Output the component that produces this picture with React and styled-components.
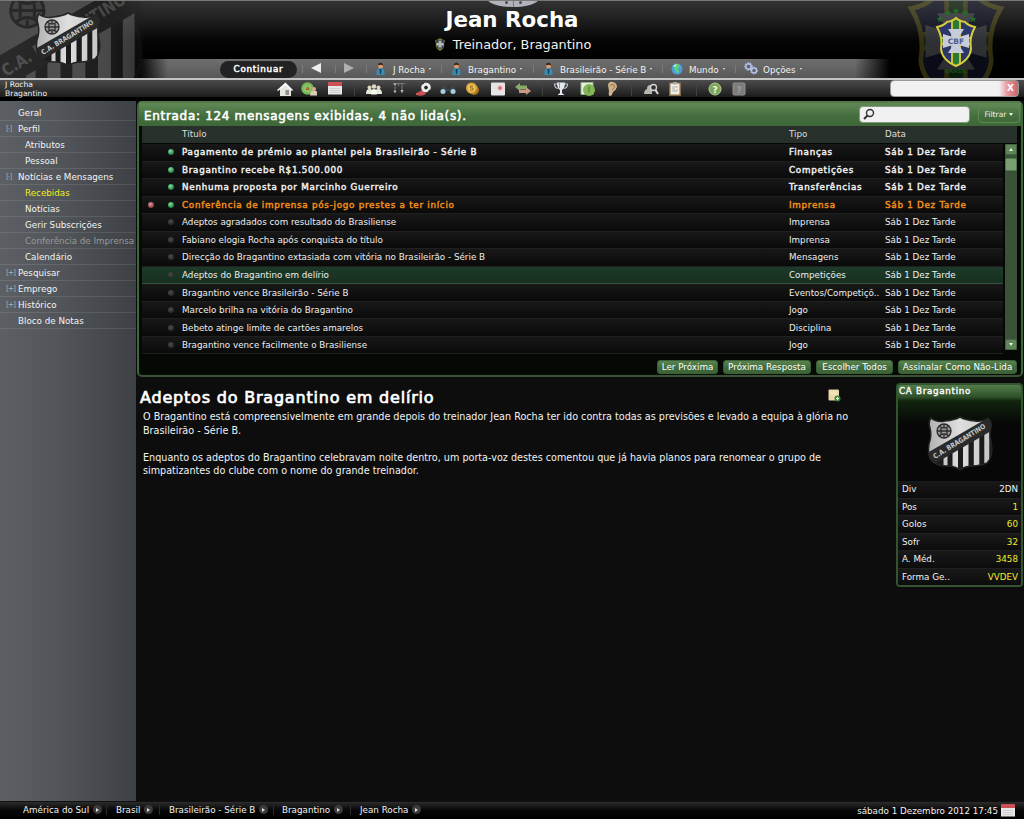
import React from 'react';
import styled, { createGlobalStyle } from 'styled-components';

const GlobalStyle = createGlobalStyle`
  * { box-sizing: border-box; }
  body {
    margin: 0;
    background: #000;
    overflow: hidden;
    color: #f2f2f2;
    font-family: 'DejaVu Sans', sans-serif;
    font-size: 8.75px;
    white-space: nowrap;
  }
`;

const Screen = styled.div`
  width: 1024px;
  height: 819px;
  display: flex;
  flex-direction: column;
`;

/* ---------- header ---------- */

const Header = styled.header`
  position: relative;
  height: 80px;
  display: flex;
  flex-direction: column;
  overflow: hidden;
  border-top: 1px solid #787878;
  border-bottom: 2px solid #c4c4c4;
  background: linear-gradient(#333 0, #1d1d1d 20px, #050505 40px, #000 58px);
`;

const Backdrop = styled.div`
  position: absolute;
  top: 0;
  left: ${(p) => (p.$right ? 'auto' : '0')};
  right: ${(p) => (p.$right ? '0' : 'auto')};
  width: 146px;
  height: 78px;
  z-index: 2;
  background: ${(p) => (p.$right ? 'none' : 'linear-gradient(to right, #2b2b2b, #1d1d1d 75%, rgba(0,0,0,0))')};
`;

const Handle = styled.div`
  position: absolute;
  top: -9px;
  left: 488px;
  width: 50px;
  height: 15px;
  border-radius: 50%;
  background: #b0b3ba;
  display: flex;
  justify-content: center;
  align-items: flex-end;
  gap: 5px;
  padding-bottom: 3px;
`;

const HandleDot = styled.i`
  width: 3px;
  height: 3px;
  border-radius: 50%;
  background: #4c4e55;
`;

const HandleLine = styled.i`
  width: 1px;
  height: 7px;
  margin-bottom: -3px;
  background: #777;
`;

const TitleBlock = styled.div`
  height: 58px;
  display: flex;
  flex-direction: column;
  align-items: center;
`;

const Name = styled.h1`
  margin: 6px 0 0;
  height: 25px;
  line-height: 25px;
  font-size: 21.4px;
  font-weight: bold;
  color: #fff;
`;

const Role = styled.div`
  display: flex;
  align-items: center;
  gap: 8px;
  height: 24px;
  font-size: 12.85px;
  margin-right: -2px;
`;

const NavBar = styled.nav`
  height: 19px;
  padding-left: 220px;
  display: flex;
  align-items: center;
  background: linear-gradient(to right, #000 138px, rgba(0,0,0,0) 168px, rgba(0,0,0,0) 855px, #000 890px),
    linear-gradient(#6e6e6e, #666 40%, #585858);
`;

const Continue = styled.div`
  width: 77px;
  height: 17px;
  margin: 1px 5px 0 0;
  border-radius: 9px;
  background: #222;
  text-align: center;
  line-height: 17px;
  letter-spacing: 0.78px;
  -webkit-text-stroke: 0.5px #fff;
`;

const NavCell = styled.div`
  width: ${(p) => p.$w}px;
  height: 19px;
  display: flex;
  align-items: center;
  padding-left: ${(p) => p.$pad || 8}px;
  background: linear-gradient(#7b7b7b, #7b7b7b) 0 6px / 1px 8px no-repeat;
`;

const NavText = styled.span`
  margin: 2px 4px 0 ${(p) => p.$gap || 4}px;
`;

const NavCaret = styled.i`
  margin-top: 0;
  border: 1.5px solid transparent;
  border-top: 2.5px solid #eee;
  border-bottom: 0;
`;

/* ---------- toolbar ---------- */

const Toolbar = styled.div`
  height: 21px;
  display: flex;
  align-items: flex-start;
  background: linear-gradient(#4c4c4c, #1c1c1c 17px, #000 17px);
`;

const Who = styled.div`
  width: 277px;
  height: 17px;
  padding: 1px 0 0 5px;
  font-size: 7.65px;
  line-height: 8.5px;
`;

const ToolIcon = styled.div`
  width: 16px;
  height: 17px;
  margin-left: ${(p) => p.$gap}px;
  padding-top: 1px;
  svg { display: block; }
`;

const ToolSep = styled.i`
  width: 1px;
  height: 14px;
  margin: 2px 0 0 ${(p) => p.$gap}px;
  background: #414141;
`;

const Lookup = styled.div`
  width: 129px;
  height: 17px;
  margin: 0 5px 0 auto;
  border: 1px solid #999;
  border-radius: 4px;
  background: linear-gradient(to right, #f1f1f1 108px, #e89b9f 116px, #c9656c);
  display: flex;
  justify-content: flex-end;
  padding-right: 4px;
  color: #fff;
  font-size: 9px;
  font-weight: bold;
  line-height: 15px;
`;

/* ---------- body ---------- */

const Body = styled.div`
  height: 700px;
  display: flex;
`;

const Sidebar = styled.aside`
  width: 136px;
  padding-top: 4px;
  background: linear-gradient(to right, #5c6064, #515559 45%, #3d4044);
`;

const SideItem = styled.div`
  height: 16px;
  line-height: 16px;
  display: flex;
  border-bottom: 1px solid rgba(255,255,255,0.1);
  color: ${(p) => (p.$active ? '#f0ee1c' : p.$off ? '#96999b' : '#f4f4f4')};
  padding-left: ${(p) => (p.$sub ? 25 : 6)}px;
  letter-spacing: ${(p) => (p.$off ? '-0.03px' : '0')};
`;

const Fold = styled.span`
  width: ${(p) => (p.$hide ? 0 : 12)}px;
  color: #a9acae;
  font-size: 7.5px;
  letter-spacing: -1.1px;
  overflow: hidden;
`;

const Main = styled.main`
  width: 888px;
  background: #0d0d0d;
`;

const Panel = styled.section`
  height: 276px;
  margin: 0 1px 0 1px;
  border: 2px solid #3e6439;
  border-top-color: #557a4e;
  border-bottom-color: #3a5136;
  border-radius: 5px;
  background: #060806;
  box-shadow: inset 0 0 2px #142412;
`;

const PanelHead = styled.div`
  height: 23px;
  display: flex;
  align-items: center;
  padding: 0 1px 0 5px;
  background: linear-gradient(#608957, #446d3d 60%, #3f6839);
`;

const PanelTitle = styled.h2`
  flex: 1;
  margin: 3px 0 0;
  font-size: 12px;
  font-weight: normal;
  letter-spacing: 0.68px;
  -webkit-text-stroke: 0.55px #fff;
  color: #fff;
`;

const Search = styled.div`
  width: 111px;
  height: 17px;
  border: 1px solid #7f9c7a;
  border-radius: 4px;
  background: #f1f1f1;
  padding: 1px 3px;
`;

const Filter = styled.div`
  width: 42px;
  height: 17px;
  margin-left: 8px;
  border: 1px solid #5d8955;
  border-radius: 4px;
  display: flex;
  align-items: center;
  justify-content: center;
  gap: 3px;
  font-size: 7.6px;
`;

const TableArea = styled.div`
  display: flex;
  padding: 1px 0 0 3px;
`;

const Rows = styled.div`
  width: 861px;
`;

const Columns = styled.div`
  width: 875px;
  height: 17px;
  margin-left: 3px;
  display: grid;
  grid-template-columns: 19px 21px 607px 96px 1fr;
  align-items: center;
  line-height: 15px;
  background: #28302c;
  color: #dedede;
`;

const MessageRow = styled.div`
  height: 17.54px;
  display: grid;
  grid-template-columns: 20px 20px 607px 96px 1fr;
  align-items: center;
  background: ${(p) => (p.$picked ? 'linear-gradient(#1d3a2a, #17301f)' : 'linear-gradient(#181818, #0a0a0a)')};
  border-bottom: 1px solid ${(p) => (p.$picked ? '#33543f' : '#202020')};
  color: ${(p) => (p.$urgent ? '#ef8e1a' : '#efefef')};
  letter-spacing: ${(p) => (p.$unread ? '0.73px' : '0')};
  -webkit-text-stroke: ${(p) => (p.$unread ? '0.45px' : '0')};
`;

const Dot = styled.i`
  width: 6px;
  height: 6px;
  margin-left: 6px;
  border-radius: 50%;
  background: ${(p) =>
    p.$tone === 'green'
      ? 'radial-gradient(circle at 40% 35%, #8ce0a4, #2c8a4c 60%, #14502a)'
      : p.$tone === 'red'
        ? 'radial-gradient(circle at 40% 35%, #e09aa0, #9a4a50 60%, #5a2428)'
        : p.$tone === 'grey'
          ? 'radial-gradient(circle at 40% 35%, #4c4c4c, #2f2f2f 60%, #1c1c1c)'
          : 'none'};
`;

const Scroll = styled.div`
  width: 12px;
  height: 206px;
  margin-left: 2px;
  display: flex;
  flex-direction: column;
  background: #3a5237;
`;

const ScrollButton = styled.div`
  height: 11px;
  display: flex;
  align-items: center;
  justify-content: center;
  background: #5f8558;
  border: 1px solid #456540;
  border-radius: 2px;
  margin-top: ${(p) => (p.$last ? 'auto' : '0')};
`;

const ScrollThumb = styled.div`
  height: 13px;
  margin-top: 3px;
  background: #78a071;
  border: 1px solid #527a4b;
  border-radius: 2px;
`;

const Arrow = styled.i`
  border: 2px solid transparent;
  border-${(p) => (p.$up ? 'bottom' : 'top')}: 3px solid #e8f2e6;
  border-${(p) => (p.$up ? 'top' : 'bottom')}: 0;
`;

const Actions = styled.div`
  display: flex;
  justify-content: flex-end;
  gap: 5px;
  padding: 6px 4px 0 0;
`;

const Action = styled.div`
  width: ${(p) => p.$w}px;
  height: 14px;
  border-radius: 3px;
  border: 1px solid #3b6035;
  background: linear-gradient(#5a8351, #416a3a 60%, #3c6335);
  text-align: center;
  line-height: 13px;
  color: #fff;
`;

const Reader = styled.div`
  display: flex;
  padding-top: 6px;
`;

const Article = styled.article`
  width: 760px;
  padding: 5px 0 0 4px;
`;

const ArticleHead = styled.div`
  display: flex;
  height: 22px;
  align-items: flex-start;
  h2 {
    width: 688px;
    margin: 0;
    line-height: 19px;
    font-size: 16px;
    font-weight: normal;
    letter-spacing: 0.8px;
    color: #fff;
    -webkit-text-stroke: 0.7px #fff;
  }
  svg { margin-top: 1px; }
`;

const Paragraph = styled.p`
  margin: 0 0 13.6px 3px;
  font-size: 9.63px;
  line-height: 13.6px;
`;

const Card = styled.aside`
  width: 127px;
  height: 204px;
  border: 2px solid #34532f;
  border-radius: 4px;
  background: #070707;
  overflow: hidden;
`;

const CardTop = styled.div`
  height: 96px;
  padding-left: 1px;
  background: linear-gradient(#517d49, #2f5029 12px, #10240d 16px, #070707 40px);
`;

const CardTitle = styled.div`
  height: 14px;
  line-height: 12px;
  letter-spacing: 0.7px;
  -webkit-text-stroke: 0.4px #fff;
`;

const CardCrest = styled.div`
  display: flex;
  justify-content: center;
  padding-top: 17px;
  svg { overflow: visible; }
`;

const Stat = styled.div`
  height: 17.5px;
  padding: 0 3px 0 4px;
  display: flex;
  justify-content: space-between;
  align-items: center;
  background: linear-gradient(#191919, #0c0c0c);
  border-bottom: 1px solid #202020;
  b {
    font-weight: normal;
    color: ${(p) => (p.$plain ? '#f2f2f2' : '#eeec2c')};
  }
`;

/* ---------- footer ---------- */

const Footer = styled.footer`
  height: 18px;
  display: flex;
  align-items: center;
  padding-bottom: 2px;
  background: linear-gradient(#2c2c2c, #070707 8px, #000);
  border-top: 1px solid #111;
`;

const Crumb = styled.div`
  width: ${(p) => p.$w}px;
  padding-left: ${(p) => p.$pad}px;
  display: flex;
  align-items: center;
  gap: 4px;
  border-right: 1px solid ${(p) => (p.$last ? 'transparent' : '#2b2b2b')};
`;

const CrumbArrow = styled.i`
  width: 9px;
  height: 9px;
  border-radius: 50%;
  background: #3c3c3c;
  display: flex;
  align-items: center;
  justify-content: center;
  &::after {
    content: '';
    border: 2px solid transparent;
    border-left: 3px solid #ddd;
    border-right: 0;
  }
`;

const Clock = styled.div`
  margin: 2px 8px 0 auto;
  display: flex;
  align-items: center;
  gap: 2px;
`;

/* ---------- drawings ---------- */

const SHIELD = 'M4 2 Q10 7 18 5 Q28 4 33 1 Q38 4 48 5 Q56 6 61 2 Q65 5 64 12 Q62 18 64 26 Q67 40 60 47 Q52 50 46 50 Q38 50 33 54 Q28 50 20 50 Q10 50 5 45 Q0 40 2 28 Q5 20 3 12 Q1 6 4 2Z';

const ClubCrest = ({ id, scale = 1, x = 0, y = 0, dim = 1 }) => (
  <g transform={`translate(${x} ${y}) scale(${scale})`} opacity={dim}>
    <clipPath id={id}><path d={SHIELD} /></clipPath>
    <linearGradient id={`${id}g`} gradientUnits="userSpaceOnUse" x1="0" y1="0" x2="66" y2="0">
      <stop offset="0" stopColor="#b0b0b0" />
      <stop offset=".5" stopColor="#dedede" />
      <stop offset="1" stopColor="#c4c4c4" />
    </linearGradient>
    <path d={SHIELD} fill={`url(#${id}g)`} />
    <g clipPath={`url(#${id})`}>
      <path d="M0 42L66 5V54H0Z" fill="#1b1b1b" />
      <path
        d="M16.500 38h4v16h-4zM25.500 30h5.500v24h-5.500zM36 26h5.500v28H36zM46.800 20h5.500v32h-5.500zM57.300 14h5v35h-5z"
        fill={`url(#${id}g)`}
      />
      <path d="M7 45h2v2H7z" fill="#ccc" />
      <path d="M0 37L66 -1V14L0 52Z" fill="#2a2a2a" />
      <g fill="none" stroke="#2c2c2c" strokeWidth="1.300">
        <circle cx="17" cy="15" r="7" fill="#999" />
        <path d="M10 15h14M12 10q5 4 10 0M12 20q5-4 10 0M14 12v6M20 12v6M17 8v3M17 19v3" />
      </g>
    </g>
    <path d={SHIELD} fill="none" stroke="#252525" strokeWidth="1.500" />
    <text transform="translate(8 43) rotate(-31.500)" fontSize="7" fontWeight="bold" fontFamily="DejaVu Sans" fill="#c9c9c9" textLength="60" lengthAdjust="spacingAndGlyphs">C.A. BRAGANTINO</text>
  </g>
);

const CBF = 'M20 1Q23 4 29 5Q33 9 39 10Q33 20 35 32Q34 43 20 49Q6 43 5 32Q7 20 1 10Q7 9 11 5Q17 4 20 1Z';
const STAR = 'M0-3.500L1-1H3.500L1.500.600L2.200 3L0 1.500L-2.200 3L-1.500.600L-3.500-1H-1Z';

const NationCrest = ({ id, scale = 1, x = 0, y = 0, dim = 1, plain }) => (
  <g transform={`translate(${x} ${y}) scale(${scale})`} opacity={dim}>
    <clipPath id={id}><path d={CBF} /></clipPath>
    <path d={CBF} fill="#2b3768" />
    <g clipPath={`url(#${id})`}>
      <path d="M15 0h10v50H15z" fill="#c8bf3a" />
      <path d="M17 0h6v50h-6z" fill="#2c7a32" />
      <path d="M0 20h40v8H0z" fill="#c8bf3a" />
      <path d="M0 22h40v4H0z" fill="#2c7a32" />
      <path d="M12 12h16l-5 8 10-3v14l-10-3 5 8H12l5-8-10 3V17l10 3z" fill="#c6cdd8" />
    </g>
    <path d={CBF} fill="none" stroke="#d4cc3e" strokeWidth="2" />
    {!plain && (
      <text x="20" y="27" textAnchor="middle" fontSize="7.500" fontWeight="bold" fontFamily="DejaVu Sans" fill="#4a5c92">CBF</text>
    )}
  </g>
);

const Person = () => (
  <svg width="11" height="13" viewBox="0 0 11 13">
    <path d="M1.500 13V9Q2 6 5.500 6T9.500 9V13Z" fill="#378bb4" />
    <path d="M4.500 7h2l-.500 5h-1z" fill="#163e58" />
    <circle cx="5.500" cy="4" r="2.500" fill="#d69b70" />
    <path d="M3 3.500Q3 .800 5.500 .800T8 3.500Q5.500 2 3 3.500Z" fill="#3e1c10" />
  </svg>
);

const Globe = () => (
  <svg width="12" height="12" viewBox="0 0 12 12">
    <circle cx="6" cy="6" r="5.500" fill="#4f9be0" />
    <path d="M4 1Q8 0 9 3L7 6 8 9Q6 11 5 9L3 6Q2 3 4 1Z" fill="#5ccf7c" />
    <path d="M2 3Q4 1 6 1.500L4 4Z" fill="#c8f0ff" />
  </svg>
);

const Gears = () => (
  <svg width="14" height="13" viewBox="0 0 14 13">
    <g fill="none" stroke="#b4c4ee">
      <circle cx="4.500" cy="4.500" r="2.700" strokeWidth="1.500" />
      <circle cx="4.500" cy="4.500" r="3.900" strokeWidth="1" strokeDasharray="1.400 1.400" />
      <circle cx="10" cy="8.500" r="2.500" strokeWidth="1.400" />
      <circle cx="10" cy="8.500" r="3.500" strokeWidth="1" strokeDasharray="1.300 1.300" />
    </g>
  </svg>
);

const Calendar = () => (
  <svg width="16" height="15" viewBox="0 0 16 15">
    <path d="M1 1.500h14V13.500H1z" fill="#e8e6e6" />
    <path d="M1 1h14v4H1z" fill="#cb5156" />
    <path d="M3 7.500h10M3 9.500h10M3 11.500h10" stroke="#cfcfd3" />
  </svg>
);

const Lens = () => (
  <svg width="12" height="12" viewBox="0 0 12 12">
    <circle cx="7" cy="5" r="3.500" fill="none" stroke="#333" strokeWidth="1.400" />
    <path d="M4.500 7.500L1 11" stroke="#333" strokeWidth="2" />
  </svg>
);

const Note = () => (
  <svg width="13" height="13" viewBox="0 0 13 13">
    <rect x=".500" y=".500" width="10.500" height="11" rx="1" fill="#e9d7a6" />
    <path d="M2 3h7M2 5h7" stroke="#f7edcd" />
    <circle cx="9.500" cy="9.500" r="3" fill="#3f8a3c" />
    <path d="M8 9.500h3M9.500 8v3" stroke="#e5f5e0" />
  </svg>
);

const toolIcons = {
  home: <><path d="M3 8v7h11V8L8.500 3z" fill="#e6e4de" /><path d="M0 9L8.500 1.500 16 9l-1 1-6.500-5.500L1 10z" fill="#fafafa" /><path d="M8.500 9h3.500v5H8.500z" fill="#8f908a" /></>,
  finance: <><circle cx="6.500" cy="7.500" r="6.200" fill="#77b956" /><circle cx="6.500" cy="7.500" r="4" fill="#8cc66c" /><path d="M4.500 9l2-4 2.500 4z" fill="#b8602c" /><path d="M9 14.500q0-5 4-5t4 5z" fill="#d7cdb8" /><circle cx="13" cy="8" r="2" fill="#d8ad83" /></>,
  people: <><g fill="#ddd4c4"><circle cx="3.500" cy="6.500" r="2" /><circle cx="8" cy="5.500" r="2.300" /><circle cx="12.500" cy="6.500" r="2" /></g><path d="M0 13q0-5 3.500-5T8 11q1-3 4.500-3t3.500 5z" fill="#e3ebda" /><path d="M5 13.500q0-5.500 3-5.500t3 5.500z" fill="#f5f7ef" /></>,
  tactics: <><path d="M2 2.500h12M4 2.500V10M11 2.500V12M7.500 3v2" stroke="#6f7b6f" fill="none" /><path d="M2.500 4l1.500-2 1.500 2zM9.500 9l1.500 3 1.500-3z" fill="#b5bfb5" /><circle cx="4" cy="10.500" r="1.200" fill="#a8b2a8" /></>,
  ball: <><path d="M0 12q4-1 7-4l3 5q-4 3-10 1z" fill="#c95156" /><circle cx="10" cy="6.500" r="4.800" fill="#eee" /><path d="M10 4.500l2 1.500-.800 2.300H8.800L8 6z" fill="#222" /><path d="M6 3l2-1M14 9l-2 2" stroke="#333" strokeWidth="1.300" /></>,
  scout: <><path d="M2 4h3l2 4h3l2-4h2l2 7h-5l-1-1H6l-1 1H0z" fill="#3c444b" /><circle cx="3" cy="10.500" r="2.500" fill="#a6cddb" /><circle cx="13" cy="10.500" r="2.500" fill="#a6cddb" /></>,
  coins: <><circle cx="10" cy="9" r="5" fill="#a8741e" /><circle cx="7.500" cy="7" r="5.500" fill="#dca63a" /><circle cx="7.500" cy="7" r="3.800" fill="#eac35e" /><path d="M9 5H6.500v2H9v2H6" stroke="#9a6a14" fill="none" /></>,
  first: <><rect x="1" y="1.500" width="14" height="13" rx="1" fill="#e6e4e4" /><circle cx="10" cy="7" r="3" fill="#efc8cb" /><path d="M10 5v4M8 7h4" stroke="#cf6a74" strokeWidth="1.300" /></>,
  transfer: <><path d="M0 6l5-4v2.500h7V8H5v2z" fill="#86ad67" /><path d="M16 10l-5-4v2.500H4V12h7v2z" fill="#c99a83" /></>,
  trophy: <><path d="M4 1.500h8q0 6-3 7.500v3l2.500 2h-7L7 12V9Q4 7.500 4 1.500z" fill="#e3e9ef" /><path d="M4 3H1.500q0 4 3.500 4.500M12 3h2.500q0 4-3.500 4.500" stroke="#b9c2ca" fill="none" strokeWidth="1.200" /><path d="M6.500 2v5" stroke="#8b98a4" /></>,
  fixtures: <><path d="M1 1.500h12v12H1z" fill="#e6eedf" stroke="#8fb57d" /><circle cx="9" cy="9" r="6" fill="#83b455" /><path d="M9 5.500v6" stroke="#5c8e38" fill="none" strokeWidth="1.500" /></>,
  ear: <><path d="M4 4q1-4 5-3t4 5q-1 3-4 5-1 4-3 4t-1-5z" fill="#d0b28a" /><path d="M6 5q2-3 4-1t-2 5" stroke="#957247" fill="none" /></>,
  search: <><path d="M1 13q0-4 3-5 0-4 3-4t2 4v5z" fill="#b8b7ae" /><circle cx="10.500" cy="6.500" r="3" fill="#343434" stroke="#d7d7d2" strokeWidth="1.300" /><path d="M12.500 9l2.500 4" stroke="#d7d7d2" strokeWidth="2" /></>,
  clipboard: <><path d="M2 1.500h12V15H2z" fill="#8a6c47" /><path d="M3.500 2.500h9v11h-9z" fill="#f0eee4" /><path d="M6 1h4v2.500H6z" fill="#aaa" /><path d="M5 6h6M5 8h3M5 10h5M8 11l3-3" stroke="#b7b5aa" /></>,
  help: <><circle cx="8" cy="8" r="6" fill="#7da65a" stroke="#b4cf97" /><text x="8" y="11.500" textAnchor="middle" fontSize="9" fontWeight="bold" fill="#f0f6e8">?</text></>,
  manual: <><rect x="2" y="2" width="12" height="12" rx="1" fill="#7d7d7d" stroke="#8f8f8f" /><text x="8" y="11.500" textAnchor="middle" fontSize="9" fontWeight="bold" fill="#9d9d9d">?</text></>,
};

/* ---------- data ---------- */

const tools = [
  ['home', 0], ['finance', 8], ['calendar', 10], ['|', 11],
  ['people', 11], ['tactics', 9], ['ball', 9], ['scout', 8], ['coins', 8], ['first', 10], ['transfer', 9], ['|', 11],
  ['trophy', 10], ['fixtures', 11], ['ear', 8], ['|', 11],
  ['search', 11], ['clipboard', 8], ['|', 13],
  ['help', 10], ['manual', 8],
];

const side = [
  { t: 'Geral', f: ' ' },
  { t: 'Perfil', f: '[-]' },
  { t: 'Atributos', sub: true },
  { t: 'Pessoal', sub: true },
  { t: 'Notícias e Mensagens', f: '[-]' },
  { t: 'Recebidas', sub: true, active: true },
  { t: 'Notícias', sub: true },
  { t: 'Gerir Subscrições', sub: true },
  { t: 'Conferência de Imprensa', sub: true, off: true },
  { t: 'Calendário', sub: true },
  { t: 'Pesquisar', f: '[+]' },
  { t: 'Emprego', f: '[+]' },
  { t: 'Histórico', f: '[+]' },
  { t: 'Bloco de Notas', f: ' ' },
];

const messages = [
  ['Pagamento de prémio ao plantel pela Brasileirão - Série B', 'Finanças', 'unread'],
  ['Bragantino recebe R$1.500.000', 'Competições', 'unread'],
  ['Nenhuma proposta por Marcinho Guerreiro', 'Transferências', 'unread'],
  ['Conferência de imprensa pós-jogo prestes a ter início', 'Imprensa', 'urgent'],
  ['Adeptos agradados com resultado do Brasiliense', 'Imprensa'],
  ['Fabiano elogia Rocha após conquista do título', 'Imprensa'],
  ['Direcção do Bragantino extasiada com vitória no Brasileirão - Série B', 'Mensagens'],
  ['Adeptos do Bragantino em delírio', 'Competições', 'picked'],
  ['Bragantino vence Brasileirão - Série B', 'Eventos/Competiçõ..'],
  ['Marcelo brilha na vitória do Bragantino', 'Jogo'],
  ['Bebeto atinge limite de cartões amarelos', 'Disciplina'],
  ['Bragantino vence facilmente o Brasiliense', 'Jogo'],
];

const stats = [
  ['Div', '2DN'], ['Pos', '1'], ['Golos', '60'], ['Sofr', '32'], ['A. Méd.', '3458'], ['Forma Ge..', 'VVDEV'],
];

const crumbs = [
  ['América do Sul', 107, 23], ['Brasil', 53, 9], ['Brasileirão - Série B', 114, 9], ['Bragantino', 77, 8], ['Jean Rocha', 80, 9],
];

const Top = () => (
  <Header>
    <Backdrop>
      <svg width="146" height="78">
        <ClubCrest id="cbig" scale={2.37} x={-13} y={-26} dim={0.24} />
        <ClubCrest id="csmall" x={35} y={11} />
      </svg>
    </Backdrop>
    <Backdrop $right>
      <svg width="146" height="78">
        <NationCrest id="nbig" scale={2.35} x={31} y={-16} dim={0.22} plain />
        <NationCrest id="nsmall" x={58} y={16} />
        <g fill="#256d2b">
          {[[70, 12], [78, 10], [87, 12], [62, 18], [95, 18]].map(([x, y]) => (
            <path key={x} d={STAR} transform={`translate(${x} ${y})`} />
          ))}
        </g>
        <text x="78" y="72" textAnchor="middle" fontSize="5.500" fontWeight="bold" fill="#1c4a1f">BRASIL</text>
      </svg>
    </Backdrop>
    <Handle><HandleDot /><HandleLine /><HandleDot /></Handle>
    <TitleBlock>
      <Name>Jean Rocha</Name>
      <Role>
        <svg width="10" height="13" viewBox="0 0 40 50">
          <NationCrest id="nmini" plain dim={0.9} />
        </svg>
        Treinador, Bragantino
      </Role>
    </TitleBlock>
    <NavBar>
      <Continue>Continuar</Continue>
      <NavCell $w={33} $pad={9}><svg width="11" height="14"><path d="M10 2v10L0 7z" fill="#eee" transform="translate(0 -1)" /></svg></NavCell>
      <NavCell $w={31} $pad={9}><svg width="11" height="14"><path d="M0 2v10l10-5z" fill="#b0b0b0" transform="translate(0 -1)" /></svg></NavCell>
      <NavCell $w={75} $pad={9}><Person /><NavText $gap={7}>J Rocha</NavText><NavCaret /></NavCell>
      <NavCell $w={92} $pad={10}><Person /><NavText $gap={6}>Bragantino</NavText><NavCaret /></NavCell>
      <NavCell $w={129} $pad={10}><Person /><NavText $gap={6}>Brasileirão - Série B</NavText><NavCaret /></NavCell>
      <NavCell $w={73} $pad={9}><Globe /><NavText $gap={6}>Mundo</NavText><NavCaret /></NavCell>
      <NavCell $w={80} $pad={9}><Gears /><NavText $gap={5}>Opções</NavText><NavCaret /></NavCell>
    </NavBar>
  </Header>
);

const Inbox = () => (
  <Panel>
    <PanelHead>
      <PanelTitle>Entrada: 124 mensagens exibidas, 4 não lida(s).</PanelTitle>
      <Search><Lens /></Search>
      <Filter>Filtrar <Arrow /></Filter>
    </PanelHead>
    <Columns><i /><i /><span>Título</span><span>Tipo</span><span>Data</span></Columns>
    <TableArea>
      <Rows>
        {messages.map(([title, type, state]) => {
          const unread = state === 'unread' || state === 'urgent';
          return (
            <MessageRow key={title} $unread={unread} $urgent={state === 'urgent'} $picked={state === 'picked'}>
              <Dot $tone={state === 'urgent' ? 'red' : ''} />
              <Dot $tone={unread ? 'green' : 'grey'} />
              <span>{title}</span>
              <span>{type}</span>
              <span>Sáb 1 Dez Tarde</span>
            </MessageRow>
          );
        })}
      </Rows>
      <Scroll>
        <ScrollButton><Arrow $up /></ScrollButton>
        <ScrollThumb />
        <ScrollButton $last><Arrow /></ScrollButton>
      </Scroll>
    </TableArea>
    <Actions>
      <Action $w={61}>Ler Próxima</Action>
      <Action $w={88}>Próxima Resposta</Action>
      <Action $w={77}>Escolher Todos</Action>
      <Action $w={119}>Assinalar Como Não-Lida</Action>
    </Actions>
  </Panel>
);

const App = () => (
  <Screen>
    <GlobalStyle />
    <Top />
    <Toolbar>
      <Who>J Rocha<br />Bragantino</Who>
      {tools.map(([name, gap], i) =>
        name === '|' ? (
          <ToolSep key={i} $gap={gap} />
        ) : (
          <ToolIcon key={i} $gap={gap}>
            {name === 'calendar' ? <Calendar /> : <svg width="16" height="16" viewBox="0 0 16 16">{toolIcons[name]}</svg>}
          </ToolIcon>
        )
      )}
      <Lookup>X</Lookup>
    </Toolbar>
    <Body>
      <Sidebar>
        {side.map((s) => (
          <SideItem key={s.t} $sub={s.sub} $active={s.active} $off={s.off}>
            <Fold $hide={s.sub}>{s.f}</Fold>{s.t}
          </SideItem>
        ))}
      </Sidebar>
      <Main>
        <Inbox />
        <Reader>
          <Article>
            <ArticleHead><h2>Adeptos do Bragantino em delírio</h2><Note /></ArticleHead>
            <Paragraph>
              O Bragantino está compreensivelmente em grande depois do treinador Jean Rocha ter ido contra todas as previsões e levado a equipa à glória no<br />
              Brasileirão - Série B.
            </Paragraph>
            <Paragraph>
              Enquanto os adeptos do Bragantino celebravam noite dentro, um porta-voz destes comentou que já havia planos para renomear o grupo de<br />
              simpatizantes do clube com o nome do grande treinador.
            </Paragraph>
          </Article>
          <Card>
            <CardTop>
              <CardTitle>CA Bragantino</CardTitle>
              <CardCrest><svg width="68" height="56" viewBox="-1 0 68 56"><ClubCrest id="ccard" /></svg></CardCrest>
            </CardTop>
            {stats.map(([label, value]) => (
              <Stat key={label} $plain={label === 'Div'}><span>{label}</span><b>{value}</b></Stat>
            ))}
          </Card>
        </Reader>
      </Main>
    </Body>
    <Footer>
      {crumbs.map(([name, w, pad], i) => (
        <Crumb key={name} $w={w} $pad={pad} $last={i === crumbs.length - 1}>{name}<CrumbArrow /></Crumb>
      ))}
      <Clock>sábado 1 Dezembro 2012 17:45 <Calendar /></Clock>
    </Footer>
  </Screen>
);

export default App;
